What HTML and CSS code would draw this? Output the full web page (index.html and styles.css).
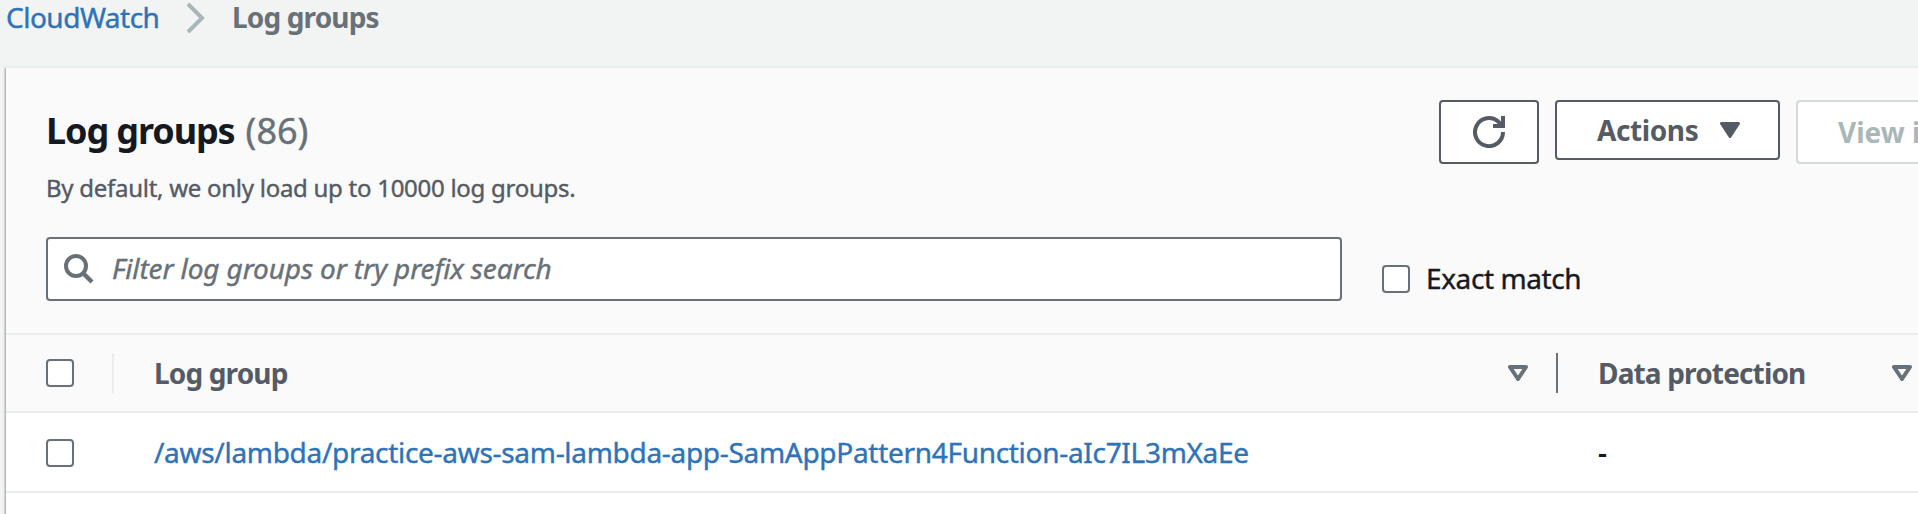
FILE: index.html
```html
<!DOCTYPE html>
<html lang="en">
<head>
<meta charset="utf-8">
<title>Log groups</title>
<link rel="stylesheet" href="styles.css">
</head>
<body>
<nav class="breadcrumbs">
  <a class="crumb-link" href="#">CloudWatch</a>
  <svg class="chevron" width="20" height="32" viewBox="0 0 20 32"><path d="M2 2 L16 16 L2 30" fill="none" stroke="#aab7b8" stroke-width="4"/></svg>
  <span class="crumb-current">Log groups</span>
</nav>
<main class="panel">
  <header class="panel-header">
    <div class="title-row">
      <div class="titles">
        <h1 class="title"><span class="title-name">Log groups</span><span class="count">(86)</span></h1>
        <p class="description">By default, we only load up to 10000 log groups.</p>
      </div>
      <div class="actions">
        <button class="btn btn-refresh" aria-label="Refresh"><svg width="32" height="32" viewBox="0 0 32 32"><path d="M30 16 A14 14 0 1 1 25.5 5.8 L29 9.5 M30 0 V10 H20" fill="none" stroke="#545b64" stroke-width="4"/></svg></button>
        <button class="btn btn-menu"><span class="btn-text">Actions</span><svg width="20" height="16" viewBox="0 0 20 16"><path d="M1.5 1.5 H18.5 L10 14.5 Z" fill="#545b64" stroke="#545b64" stroke-width="3" stroke-linejoin="round"/></svg></button>
        <button class="btn btn-disabled" disabled><span class="view-text">View in Logs Insights</span></button>
      </div>
    </div>
    <div class="filter-row">
      <div class="search">
        <svg width="30" height="30" viewBox="0 0 30 30"><circle cx="12" cy="12" r="10" fill="none" stroke="#687078" stroke-width="4"/><path d="M19 19 L28 28" stroke="#687078" stroke-width="4.5"/></svg>
        <span class="placeholder">Filter log groups or try prefix search</span>
      </div>
      <label class="exact"><span class="checkbox"></span><span class="exact-text">Exact match</span></label>
    </div>
  </header>
  <div class="row head">
    <div class="cell cell-check"><span class="checkbox"></span></div>
    <div class="cell cell-name"><span class="head-name">Log group</span><svg width="20" height="16" viewBox="0 0 20 16"><path d="M2 2 H18 L10 14 Z" fill="none" stroke="#687078" stroke-width="4" stroke-linejoin="round"/></svg></div>
    <div class="cell cell-data"><span class="head-data">Data protection</span><svg width="20" height="16" viewBox="0 0 20 16"><path d="M2 2 H18 L10 14 Z" fill="none" stroke="#687078" stroke-width="4" stroke-linejoin="round"/></svg></div>
  </div>
  <div class="row">
    <div class="cell cell-check"><span class="checkbox"></span></div>
    <div class="cell cell-name"><a class="group-link" href="#">/aws/lambda/practice-aws-sam-lambda-app-SamAppPattern4Function-aIc7IL3mXaEe</a></div>
    <div class="cell cell-data"><span class="dash">-</span></div>
  </div>
</main>
</body>
</html>
```
FILE: styles.css
```css
* { box-sizing: border-box; }
body {
  margin: 0;
  height: 514px;
  overflow: hidden;
  background: #f2f3f3;
  color: #16191f;
  font: 28px/40px "Noto Sans", sans-serif;
  white-space: nowrap;
}
a { color: #2e73b8; text-decoration: none; }
.crumb-link, .count, .description, .placeholder, .exact-text, .group-link {
  -webkit-text-stroke: .4px currentColor;
}
.breadcrumbs {
  display: flex;
  height: 66px;
  padding-left: 6px;
}
.breadcrumbs > a, .breadcrumbs > span { margin-top: -3px; }
.crumb-link { width: 153px; letter-spacing: -0.5px; }
.chevron { margin: 2px 26px 0 27px; }
.crumb-current { color: #687078; font-weight: 700; letter-spacing: -0.85px; }
.panel {
  width: 1912px;
  height: 448px;
  margin-left: 6px;
  background: #fff;
  border-top: 2px solid #eaeded;
  box-shadow: -1px 2px 2px rgba(0, 28, 36, .4);
}
.panel-header {
  height: 267px;
  padding: 32px 0 0 40px;
  background: #fafafa;
  border-bottom: 2px solid #eaeded;
}
.title-row {
  display: flex;
  justify-content: space-between;
  height: 137px;
}
.title {
  display: flex;
  gap: 11px;
  margin: 6px 0 0;
  font-size: 36px;
  line-height: 50px;
}
.title-name { letter-spacing: -1.1px; }
.count { color: #687078; font-weight: 400; letter-spacing: 0; }
.description {
  margin: 14px 0 0;
  color: #545b64;
  font-size: 24px;
  line-height: 36px;
  letter-spacing: -0.27px;
}
.actions {
  display: flex;
  align-items: flex-start;
  gap: 16px;
  width: 479px;
  overflow: hidden;
  flex: none;
}
.btn {
  display: flex;
  flex: none;
  align-items: center;
  height: 64px;
  padding: 0;
  border: 2px solid #545b64;
  border-radius: 4px;
  background: #fff;
  color: #545b64;
  font: 700 28px/40px "Noto Sans", sans-serif;
}
.btn-refresh { width: 100px; justify-content: center; }
.btn-menu { width: 225px; height: 60px; padding: 0 38px 0 40px; justify-content: space-between; }
.btn-text { letter-spacing: -0.4px; }
.btn-disabled { padding: 0 40px; border-color: #d5dbdb; color: #aab7b8; }
.filter-row { display: flex; gap: 40px; }
.search {
  display: flex;
  align-items: center;
  gap: 18px;
  width: 1296px;
  height: 64px;
  padding-left: 16px;
  border: 2px solid #687078;
  border-radius: 4px;
  background: #fff;
}
.placeholder { margin-bottom: 2px; color: #687078; font-style: italic; letter-spacing: -0.13px; }
.exact { display: flex; align-items: center; gap: 16px; padding-top: 20px; height: 64px; }
.exact-text { margin-bottom: 2px; letter-spacing: -0.4px; }
.checkbox {
  flex: none;
  width: 28px;
  height: 28px;
  border: 2px solid #687078;
  border-radius: 4px;
  background: #fff;
}
.row {
  display: flex;
  align-items: center;
  height: 80px;
  border-bottom: 2px solid #eaeded;
}
.head { height: 78px; background: #fafafa; color: #545b64; font-weight: 700; }
.head-name, .head-data { letter-spacing: -0.85px; }
.group-link { letter-spacing: -0.3px; }
.dash { font-weight: 600; }
.cell { display: flex; align-items: center; justify-content: space-between; height: 40px; }
.cell-check { width: 108px; padding-left: 40px; border-right: 2px solid transparent; }
.row:last-child .checkbox { margin-top: 2px; }
.cell-name { width: 1444px; padding: 0 28px 0 40px; border-right: 2px solid transparent; }
.cell-data { width: 360px; padding: 0 6px 0 40px; }
.head .cell-check { border-color: #eaeded; }
.head .cell-name { border-color: #687078; }
```
